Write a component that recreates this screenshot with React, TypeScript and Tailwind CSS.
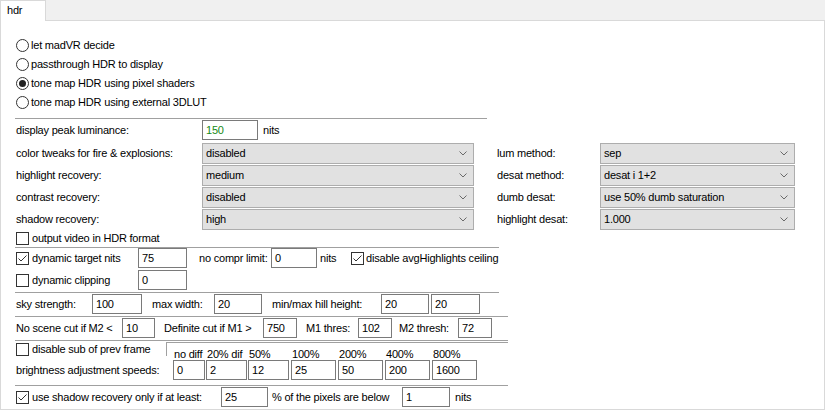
import React from "react";

const Chk = ({ checked }: { checked?: boolean }) => (
  <div className="w-[13px] h-[13px] border border-[#333] bg-white flex-none flex items-center justify-center">
    {checked && (
      <svg width="11" height="11" viewBox="0 0 11 11">
        <polyline points="1.5,5.5 4,8 9.5,2.5" fill="none" stroke="#333" strokeWidth="1" />
      </svg>
    )}
  </div>
);

const Radio = ({ checked, label }: { checked?: boolean; label: string }) => (
  <div className="h-[19px] flex items-center">
    <div className="w-[13px] h-[13px] rounded-full border border-[#333] bg-white flex items-center justify-center flex-none">
      {checked && <div className="w-[7px] h-[7px] rounded-full bg-[#222]" />}
    </div>
    <span className="ml-[2px]">{label}</span>
  </div>
);

const Inp = ({ w, v, green }: { w: string; v: string; green?: boolean }) => (
  <div className={`h-[20px] flex-none border border-[#7a7a7a] bg-white pl-[3px] flex items-center ${w} ${green ? "text-[#168a16]" : ""}`}>
    {v}
  </div>
);

const Sel = ({ w, v }: { w: string; v: string }) => (
  <div className={`h-[21px] flex-none border border-[#adadad] bg-[#e1e1e1] pl-[3px] pr-[6px] flex items-center justify-between ${w}`}>
    <span>{v}</span>
    <svg width="8" height="5" viewBox="0 0 8 5">
      <path d="M0.5 0.5 L4 4 L7.5 0.5" fill="none" stroke="#6a6a6a" strokeWidth="1" />
    </svg>
  </div>
);

const Sep = ({ w }: { w: string }) => <div className={`h-px bg-[#a0a0a0] -ml-[1px] ${w}`} />;

const SelRow = ({ l1, v1, l2, v2 }: { l1: string; v1: string; l2: string; v2: string }) => (
  <div className="flex items-center h-[21px]">
    <div className="w-[186px] flex-none">{l1}</div>
    <Sel w="w-[272px]" v={v1} />
    <div className="w-[103px] ml-[23px] flex-none">{l2}</div>
    <Sel w="w-[195px]" v={v2} />
  </div>
);

const speeds: [string, string, string][] = [
  ["no diff", "0", "w-[32px]"],
  ["20% dif", "2", "w-[41px]"],
  ["50%", "12", "w-[41px]"],
  ["100%", "25", "w-[45px]"],
  ["200%", "50", "w-[45px]"],
  ["400%", "200", "w-[45px]"],
  ["800%", "1600", "w-[45px]"],
];
const gaps = ["ml-0", "ml-[1px]", "ml-[1px]", "ml-[2px]", "ml-[2px]", "ml-[2px]", "ml-[2px]"];

export default function App() {
  return (
    <div className="w-[825px] h-[410px] bg-[#f0f0f0] text-[11px] leading-[13px] tracking-[-0.2px] text-black font-['Liberation_Sans',Arial,sans-serif] overflow-hidden">
      <div className="h-[20px] flex">
        <div className="relative z-10 w-[46px] h-[21px] bg-white border-l border-t border-r border-[#d9d9d9] pl-[6px] pt-[3px]">hdr</div>
      </div>
      <div className="w-[825px] h-[390px] bg-white border border-[#d9d9d9] pl-[15px] pt-[15px]">
        <Radio label="let madVR decide" />
        <Radio label="passthrough HDR to display" />
        <Radio checked label="tone map HDR using pixel shaders" />
        <Radio label="tone map HDR using external 3DLUT" />
        <div className="mt-[6px]"><Sep w="w-[472px]" /></div>
        <div className="mt-[1px] h-[20px] flex items-center">
          <div className="w-[186px] flex-none">display peak luminance:</div>
          <Inp w="w-[56px]" v="150" green />
          <span className="ml-[5px]">nits</span>
        </div>
        <div className="mt-[3px] flex flex-col gap-[1px]">
          <SelRow l1="color tweaks for fire & explosions:" v1="disabled" l2="lum method:" v2="sep" />
          <SelRow l1="highlight recovery:" v1="medium" l2="desat method:" v2="desat i 1+2" />
          <SelRow l1="contrast recovery:" v1="disabled" l2="dumb desat:" v2="use 50% dumb saturation" />
          <SelRow l1="shadow recovery:" v1="high" l2="highlight desat:" v2="1.000" />
        </div>
        <div className="mt-[1px] h-[15px] flex items-center">
          <Chk />
          <span className="ml-[3px]">output video in HDR format</span>
        </div>
        <div className="mt-[1px]"><Sep w="w-[484px]" /></div>
        <div className="h-[20px] flex items-center">
          <div className="w-[122px] flex-none flex items-center">
            <Chk checked />
            <span className="ml-[3px]">dynamic target nits</span>
          </div>
          <Inp w="w-[49px]" v="75" />
          <div className="w-[84px] pl-[12px] flex-none whitespace-nowrap">no compr limit:</div>
          <Inp w="w-[46px]" v="0" />
          <div className="w-[34px] pl-[3px] flex-none">nits</div>
          <Chk checked />
          <span className="ml-[2px] whitespace-nowrap">disable avgHighlights ceiling</span>
        </div>
        <div className="mt-[2px] h-[20px] flex items-center">
          <div className="w-[122px] flex-none flex items-center">
            <Chk />
            <span className="ml-[3px]">dynamic clipping</span>
          </div>
          <Inp w="w-[49px]" v="0" />
        </div>
        <div className="mt-[2px]"><Sep w="w-[484px]" /></div>
        <div className="mt-[1px] h-[20px] flex items-center">
          <div className="w-[76px] flex-none">sky strength:</div>
          <Inp w="w-[50px]" v="100" />
          <div className="w-[72px] pl-[10px] flex-none">max width:</div>
          <Inp w="w-[48px]" v="20" />
          <div className="w-[119px] pl-[10px] flex-none">min/max hill height:</div>
          <Inp w="w-[48px]" v="20" />
          <div className="ml-[2px]"><Inp w="w-[49px]" v="20" /></div>
        </div>
        <div className="mt-[2px]"><Sep w="w-[493px]" /></div>
        <div className="mt-[1px] h-[20px] flex items-center">
          <div className="w-[106px] flex-none">No scene cut if M2 &lt;</div>
          <Inp w="w-[33px]" v="10" />
          <div className="w-[108px] pl-[9px] flex-none">Definite cut if M1 &gt;</div>
          <Inp w="w-[34px]" v="750" />
          <div className="w-[61px] pl-[9px] flex-none">M1 thres:</div>
          <Inp w="w-[34px]" v="102" />
          <div className="w-[66px] pl-[7px] flex-none">M2 thresh:</div>
          <Inp w="w-[34px]" v="72" />
        </div>
        <div className="mt-[2px]"><Sep w="w-[493px]" /></div>
        <div className="mt-[1px] h-[14px] flex">
          <div className="w-[150px] flex-none flex items-center">
            <Chk />
            <span className="ml-[3px]">disable sub of prev frame</span>
          </div>
          <div className="w-[342px] h-[14px] border-l border-t border-[#a0a0a0]" />
        </div>
        <div className="-mt-[8px] h-[12px] leading-[12px] flex">
          <div className="w-[157px] flex-none" />
          {speeds.map(([h, , w], i) => (
            <div key={i} className={`${w} ${gaps[i]} flex-none pl-[1px] whitespace-nowrap`}>{h}</div>
          ))}
        </div>
        <div className="h-[20px] flex items-center">
          <div className="w-[157px] flex-none">brightness adjustment speeds:</div>
          {speeds.map(([, v, w], i) => (
            <div key={i} className={gaps[i]}><Inp w={w} v={v} /></div>
          ))}
        </div>
        <div className="mt-[5px]"><Sep w="w-[493px]" /></div>
        <div className="mt-[1px] h-[20px] flex items-center">
          <div className="w-[205px] flex-none flex items-center">
            <Chk checked />
            <span className="ml-[3px]">use shadow recovery only if at least:</span>
          </div>
          <Inp w="w-[47px]" v="25" />
          <div className="w-[134px] pl-[4px] flex-none">% of the pixels are below</div>
          <Inp w="w-[48px]" v="1" />
          <span className="ml-[5px]">nits</span>
        </div>
      </div>
    </div>
  );
}
